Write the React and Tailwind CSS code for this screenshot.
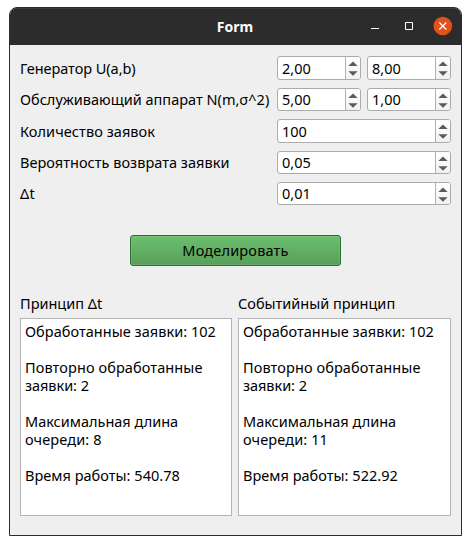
import React from 'react';

function Stepper() {
  return (
    <svg className="block h-[22px] w-[14px]" viewBox="0 0 14 22" aria-hidden="true">
      <path d="M2.3 9 L7 4.4 L11.7 9 Z M2.3 14.2 L7 18.8 L11.7 14.2 Z" fill="#5b5b5b" />
    </svg>
  );
}

function SpinBox({ value, size }) {
  return (
    <div className={`flex min-w-0 flex-1 overflow-hidden rounded-[3px] border border-[#ababab] bg-white ${size}`}>
      <span className="flex-1 pl-1">{value}</span>
      <div className="flex w-[15px] shrink-0 items-center border-l border-[#b0b0b0] bg-gradient-to-b from-white to-[#f1f1f1]">
        <Stepper />
      </div>
    </div>
  );
}

function Row({ label, labelStyle, children }) {
  return (
    <div className="flex items-start">
      <span className={`h-[23px] w-[257px] shrink-0 whitespace-nowrap ${labelStyle}`}>{label}</span>
      <div className="flex flex-1 gap-1.5">{children}</div>
    </div>
  );
}

function Results({ title, width, lines }) {
  return (
    <section className={`flex flex-col ${width}`}>
      <h2 className="h-[25px] whitespace-nowrap leading-[20px]">{title}</h2>
      <div className="h-[198px] border border-[#b4b4b4] bg-white pl-1 pt-[3px]">
        {lines.map(([text, tracking], i) => (
          <p key={i} className={`h-[18px] whitespace-nowrap leading-[18px] ${tracking}`}>{text}</p>
        ))}
      </div>
    </section>
  );
}

const report = (queue, time) => [
  ['Обработанные заявки: 102', 'tracking-[0.04px]'],
  ['', ''],
  ['Повторно обработанные', 'tracking-[0.1px]'],
  ['заявки: 2', 'tracking-[-0.05px]'],
  ['', ''],
  ['Максимальная длина', 'tracking-[0px]'],
  [`очереди: ${queue}`, 'tracking-[0.12px]'],
  ['', ''],
  [`Время работы: ${time}`, 'tracking-[0.03px]'],
];

const TALL = 'h-6 leading-[23px]';
const SHORT = 'h-[23px] leading-[21px]';

export default function App() {
  return (
    <div className="h-[545px] w-[471px] bg-white pl-[9px] pt-[7px] font-['Noto_Sans',sans-serif] text-[14.5px] text-black">
      <div className="flex h-[529px] w-[453px] flex-col overflow-hidden rounded-t-[8px] border border-[#2c2c2c] bg-[#efefef]">
        <header className="flex h-[37px] shrink-0 items-center border-t border-[#3b3b3b] bg-[#2c2c2c]">
          <div className="w-[105px]" />
          <h1 className="flex-1 pb-px pr-px text-center text-[14px] font-bold text-white">Form</h1>
          <svg className="h-[22px] w-[105px]" viewBox="0 0 105 22" fill="none" aria-hidden="true">
            <path d="M15 12.5 H23" stroke="#fff" />
            <path d="M49.5 6.5 H56.5 V13.5 H49.5 Z" stroke="#fff" />
            <circle cx="86.8" cy="10" r="9.3" fill="#e2501b" />
            <path d="M83.3 6.5 L90.3 13.5 M90.3 6.5 L83.3 13.5" stroke="#fff" strokeWidth="1.3" />
          </svg>
        </header>

        <main className="flex flex-col px-2.5 pt-[11px]">
          <div className="flex flex-col gap-2">
            <Row label="Генератор U(a,b)" labelStyle="leading-[25px] tracking-[-0.05px]">
              <SpinBox value="2,00" size={TALL} />
              <SpinBox value="8,00" size={TALL} />
            </Row>
            <Row label="Обслуживающий аппарат N(m,σ^2)" labelStyle="leading-[23px] tracking-[0.01px]">
              <SpinBox value="5,00" size={SHORT} />
              <SpinBox value="1,00" size={SHORT} />
            </Row>
            <Row label="Количество заявок" labelStyle="leading-[25px] tracking-[0.07px]">
              <SpinBox value="100" size={TALL} />
            </Row>
            <Row label="Вероятность возврата заявки" labelStyle="leading-[23px] tracking-[0.03px]">
              <SpinBox value="0,05" size={SHORT} />
            </Row>
            <Row label="Δt" labelStyle="leading-[23px] tracking-[0.2px]">
              <SpinBox value="0,01" size={SHORT} />
            </Row>
          </div>

          <button className="ml-[110px] mt-[30px] flex h-[31px] w-[211px] justify-center rounded-[3px] border border-[#2b6d32] bg-gradient-to-b from-[#6abf6d] to-[#5a9f5b] shadow-[inset_0_0_0_1px_rgba(255,255,255,0.1)]">
            <span className="leading-[29px] tracking-[0.18px]">Моделировать</span>
          </button>

          <div className="mt-[27px] flex gap-1.5">
            <Results title="Принцип Δt" width="w-[212px]" lines={report('8', '540.78')} />
            <Results title="Событийный принцип" width="w-[213px]" lines={report('11', '522.92')} />
          </div>
        </main>
      </div>
    </div>
  );
}
